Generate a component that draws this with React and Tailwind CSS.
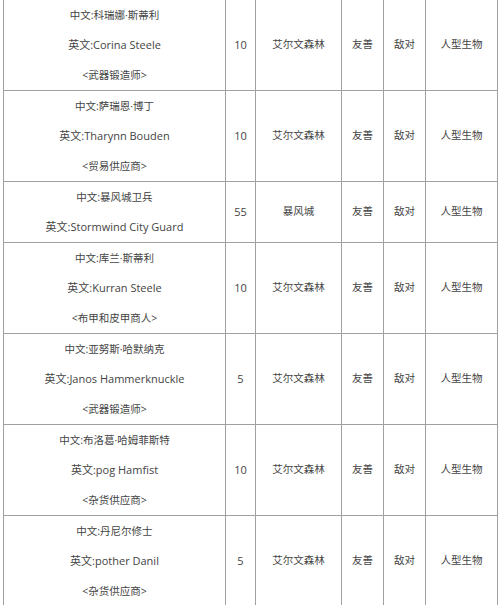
import React from "react";

const rows = [
  { cn: "中文:科瑞娜·斯蒂利", en: "英文:Corina Steele", role: "<武器锻造师>", lv: "10", zone: "艾尔文森林" },
  { cn: "中文:萨瑞恩·博丁", en: "英文:Tharynn Bouden", role: "<贸易供应商>", lv: "10", zone: "艾尔文森林" },
  { cn: "中文:暴风城卫兵", en: "英文:Stormwind City Guard", role: null, lv: "55", zone: "暴风城" },
  { cn: "中文:库兰·斯蒂利", en: "英文:Kurran Steele", role: "<布甲和皮甲商人>", lv: "10", zone: "艾尔文森林" },
  { cn: "中文:亚努斯·哈默纳克", en: "英文:Janos Hammerknuckle", role: "<武器锻造师>", lv: "5", zone: "艾尔文森林" },
  { cn: "中文:布洛葛·哈姆菲斯特", en: "英文:pog Hamfist", role: "<杂货供应商>", lv: "10", zone: "艾尔文森林" },
  { cn: "中文:丹尼尔修士", en: "英文:pother Danil", role: "<杂货供应商>", lv: "5", zone: "艾尔文森林" },
];

export default function App() {
  return (
    <div
      className="w-[500px] h-[605px] overflow-hidden bg-white text-[#444] text-[10.5px]"
      style={{ fontFamily: '"Open Sans", "Noto Sans CJK SC", sans-serif' }}
    >
      <table className="ml-[3px] -mt-px w-[494px] border-collapse table-fixed">
        <colgroup>
          <col className="w-[222px]" />
          <col className="w-[30px]" />
          <col className="w-[86px]" />
          <col className="w-[42px]" />
          <col className="w-[42px]" />
          <col className="w-[72px]" />
        </colgroup>
        <tbody>
          {rows.map((r, i) => (
            <tr key={i}>
              <td className="border border-[#a0a0a0] p-0 text-center align-middle">
                <div className="leading-[30px]">{r.cn}</div>
                <div className="leading-[30px] text-[11px]">{r.en}</div>
                {r.role && <div className="leading-[30px]">{r.role}</div>}
              </td>
              <td className="border border-[#a0a0a0] p-0 text-center align-middle text-[11px]">{r.lv}</td>
              <td className="border border-[#a0a0a0] p-0 text-center align-middle">{r.zone}</td>
              <td className="border border-[#a0a0a0] p-0 text-center align-middle">友善</td>
              <td className="border border-[#a0a0a0] p-0 text-center align-middle">敌对</td>
              <td className="border border-[#a0a0a0] p-0 text-center align-middle">人型生物</td>
            </tr>
          ))}
        </tbody>
      </table>
    </div>
  );
}
